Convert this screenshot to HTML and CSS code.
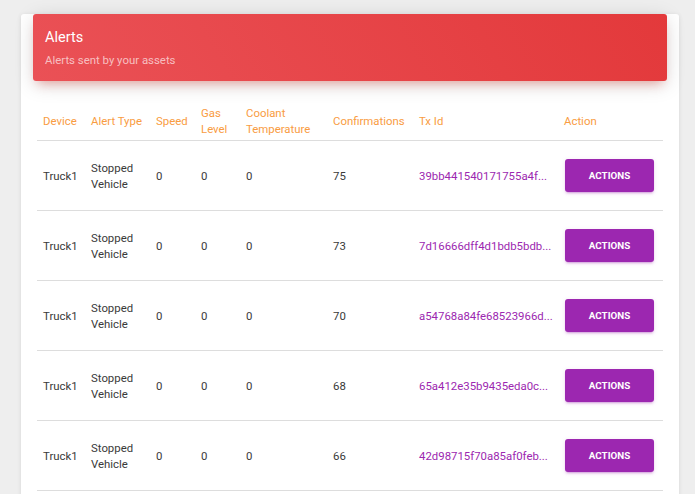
FILE: index.html
```html
<!DOCTYPE html>
<html lang="en">
<head>
<meta charset="utf-8">
<title>Alerts</title>
<link rel="stylesheet" href="styles.css">
</head>
<body>
<div class="page">
  <div class="card">
    <div class="card-header">
      <h4 class="card-title">Alerts</h4>
      <p class="card-category">Alerts sent by your assets</p>
    </div>
    <div class="card-body">
      <table class="alerts">
        <colgroup>
          <col class="c-device"><col class="c-type"><col class="c-speed"><col class="c-gas"><col class="c-cool"><col class="c-conf"><col class="c-tx"><col class="c-action">
        </colgroup>
        <thead>
          <tr>
            <th>Device</th><th>Alert Type</th><th>Speed</th><th>Gas Level</th><th>Coolant Temperature</th><th>Confirmations</th><th>Tx Id</th><th>Action</th>
          </tr>
        </thead>
        <tbody>
          <tr>
            <td>Truck1</td><td>Stopped Vehicle</td><td>0</td><td>0</td><td>0</td><td>75</td><td class="tx">39bb441540171755a4f...</td><td><button class="btn">Actions</button></td>
          </tr>
          <tr>
            <td>Truck1</td><td>Stopped Vehicle</td><td>0</td><td>0</td><td>0</td><td>73</td><td class="tx">7d16666dff4d1bdb5bdb...</td><td><button class="btn">Actions</button></td>
          </tr>
          <tr>
            <td>Truck1</td><td>Stopped Vehicle</td><td>0</td><td>0</td><td>0</td><td>70</td><td class="tx">a54768a84fe68523966d...</td><td><button class="btn">Actions</button></td>
          </tr>
          <tr>
            <td>Truck1</td><td>Stopped Vehicle</td><td>0</td><td>0</td><td>0</td><td>68</td><td class="tx">65a412e35b9435eda0c...</td><td><button class="btn">Actions</button></td>
          </tr>
          <tr>
            <td>Truck1</td><td>Stopped Vehicle</td><td>0</td><td>0</td><td>0</td><td>66</td><td class="tx">42d98715f70a85af0feb...</td><td><button class="btn">Actions</button></td>
          </tr>
        </tbody>
      </table>
    </div>
  </div>
</div>
</body>
</html>
```
FILE: styles.css
```css
html, body {
  margin: 0;
  padding: 0;
  background: #eeeeee;
  font-family: Roboto, "Liberation Sans", Arial, sans-serif;
  color: #333333;
}

.page {
  padding: 30px 16px 0 21px;
}

.card {
  background: #ffffff;
  border-radius: 3px;
  box-shadow: 0 1px 4px 0 rgba(0, 0, 0, 0.10);
  padding-bottom: 20px;
}

.card-header {
  margin: -16px 12px 0;
  padding: 15px 12px 13.5px;
  border-radius: 3px;
  background: linear-gradient(60deg, #ea5156, #e3393b);
  box-shadow: 0 4px 20px 0 rgba(0, 0, 0, 0.14), 0 7px 10px -5px rgba(244, 67, 54, 0.4);
}

.card-title {
  margin: 0;
  font-size: 14.5px;
  line-height: 18px;
  font-weight: 400;
  color: #ffffff;
}

.card-category {
  margin: 4.5px 0 0;
  font-size: 11.4px;
  line-height: 16px;
  font-weight: 400;
  color: rgba(255, 255, 255, 0.65);
}

.card-body {
  padding: 19px 16px 0;
}

.alerts {
  width: 100%;
  table-layout: fixed;
  border-collapse: separate;
  border-spacing: 0;
  font-size: 11.4px;
  line-height: 16px;
}

.c-device { width: 48px; }
.c-type { width: 65px; }
.c-speed { width: 45px; }
.c-gas { width: 45px; }
.c-cool { width: 87px; }
.c-conf { width: 86px; }
.c-tx { width: 145px; }
.c-action { width: 105px; }

.alerts th {
  text-align: left;
  font-weight: 400;
  color: #f99c42;
  padding: 5px 6px 3px;
  vertical-align: middle;
  border-bottom: 1px solid #dddddd;
}

.alerts td {
  padding: 18px 6px;
  vertical-align: middle;
  border-bottom: 1px solid #dddddd;
  font-weight: 400;
  color: #3a3a3a;
}

.alerts td.tx {
  color: #9c27b0;
  white-space: nowrap;
  overflow: hidden;
}

.btn {
  display: block;
  width: 89px;
  height: 33px;
  margin-left: 1px;
  padding: 0;
  border: none;
  border-radius: 3px;
  background: #9c27b0;
  color: #ffffff;
  font-family: Roboto, "Liberation Sans", Arial, sans-serif;
  font-size: 9.8px;
  font-weight: 700;
  text-transform: uppercase;
  box-shadow: 0 2px 2px 0 rgba(156, 39, 176, 0.14), 0 3px 1px -2px rgba(156, 39, 176, 0.2), 0 1px 5px 0 rgba(156, 39, 176, 0.12);
  cursor: pointer;
}
```
